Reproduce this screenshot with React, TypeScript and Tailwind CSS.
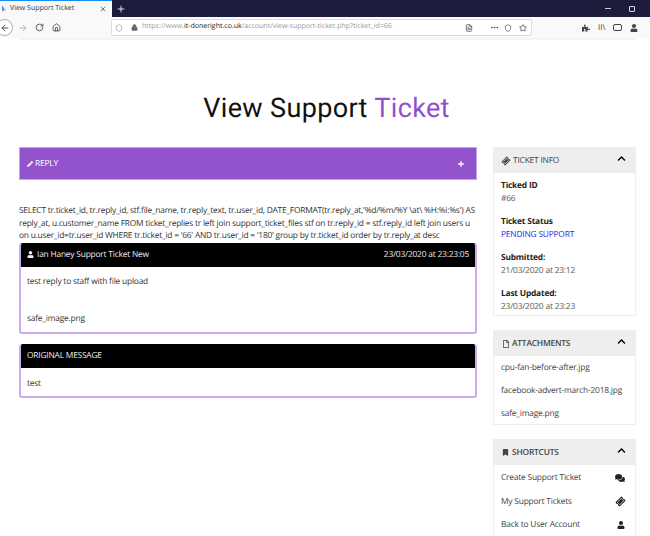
import { ArrowLeft, ArrowRight, FileText, Home, Lock, MoreHorizontal, Plus, RotateCw, Shield, Star, X } from "lucide-react";
import { FaBookmark, FaChevronUp, FaComments, FaPencilAlt, FaPuzzlePiece, FaRegFile, FaTicketAlt, FaUser } from "react-icons/fa";

function Chrome() {
  return (
    <div className="shrink-0 tracking-normal">
      {/* Tab strip */}
      <div className="flex h-[17px] items-stretch bg-[#1c1c3c]">
        <div className="flex w-[112px] items-center border-t border-t-[#1c8cf0] bg-[#f9f9fb] pl-[1px] pr-[5px] text-[7px] text-[#333]">
          <svg width="6" height="8" viewBox="0 0 6 8" className="mr-[3px]"><path d="M1 0v7l2-2 2 1z" fill="#6d8fe0" /></svg>
          <span className="flex-1">View Support Ticket</span>
          <X size={8} strokeWidth={2} />
        </div>
        <div className="flex w-[18px] items-center justify-center text-white"><Plus size={10} strokeWidth={2} /></div>
        <div className="flex flex-1 items-center justify-end gap-[18px] pr-[15px] text-white">
          <div className="h-[1px] w-[6px] bg-[#ccc]" />
          <div className="size-[6px] rounded-[1px] border border-[#ddd]" />
        </div>
      </div>
      {/* Toolbar */}
      <div className="flex h-[21px] items-center bg-[#f9f9fb] text-[#333]">
        <div className="-ml-[4px] flex size-[17px] items-center justify-center rounded-full border border-[#aaa] bg-white">
          <ArrowLeft size={10} />
        </div>
        <ArrowRight size={10} className="ml-[5px] text-[#aaa]" />
        <RotateCw size={9} className="ml-[7px]" />
        <Home size={9} className="ml-[8px]" />
        <div className="ml-[50px] flex h-[17px] w-[421px] items-center rounded-[2px] border border-[#ddd] bg-white pl-[3px] text-[7px] text-[#999]">
          <Shield size={8} />
          <Lock size={7} className="ml-[8px] text-[#666]" fill="#666" />
          <span className="ml-[4px] flex-1">https://www.<span className="text-[#222]">it-doneright.co.uk</span>/account/view-support-ticket.php?ticket_id=66</span>
          <FileText size={8} className="mr-[3px] text-[#444]" />
          <MoreHorizontal size={9} className="ml-[14px] text-[#333]" />
          <Shield size={8} className="ml-[5px] text-[#444]" />
          <Star size={8} className="ml-[7px] mr-[4px] text-[#333]" />
        </div>
        <div className="ml-[50px] flex items-center gap-[8px] text-[#444]">
          <FaPuzzlePiece size={8} />
          <span className="text-[8px] leading-none">II\</span>
          <div className="h-[7px] w-[9px] rounded-[2px] border border-[#444]" />
          <FaUser size={8} />
        </div>
      </div>
      <div className="ml-[19px] h-[2px] w-[617px] bg-[#f4f4f4]" />
    </div>
  );
}

function Message({ title, right, children }: { title: React.ReactNode; right?: string; children: React.ReactNode }) {
  return (
    <div className="overflow-hidden rounded-[3px] border-x-2 border-b-2 border-x-[#c9adee] border-b-[#c9adee] bg-white">
      <div className="-mx-[2px] flex h-[24px] items-center justify-between bg-black px-[8px] pt-[1px] text-[#eee]">
        <span className="flex items-center gap-[3px]">{title}</span>
        {right && <span>{right}</span>}
      </div>
      {children}
    </div>
  );
}

function Panel({ icon, title, strong, children }: { icon: React.ReactNode; title: string; strong?: boolean; children: React.ReactNode }) {
  return (
    <div className="border border-[#eeeeee] bg-white">
      <div className="flex h-[25px] items-center justify-between bg-[#eeeeee] pl-[8px] pr-[9px] pt-[1px] text-[#444]">
        <span className={strong ? "flex items-center gap-[2px] font-semibold" : "flex items-center gap-[2px]"}>{icon}{title}</span>
        <FaChevronUp size={9} className="-mt-[5px] text-black" />
      </div>
      {children}
    </div>
  );
}

function Info({ label, value, blue }: { label: string; value: string; blue?: boolean }) {
  return (
    <div className="leading-[12.5px]">
      <div className="font-bold text-[#222]">{label}</div>
      <div className={blue ? "text-[#2a2ae8]" : "text-[#555]"}>{value}</div>
    </div>
  );
}

export default function App() {
  return (
    <div className="flex h-[536px] w-[650px] flex-col overflow-hidden bg-white font-['Open_Sans',sans-serif] text-[8.4px] tracking-[-0.2px] text-[#333] [text-rendering:geometricPrecision]">
      <Chrome />
      <div className="flex h-[82px] shrink-0 items-end justify-center pl-[3px]">
        <h1 className="font-['Roboto',sans-serif] text-[27px] leading-[28px] tracking-[0.35px] text-[#111]">
          View Support <span className="text-[#8f4fd0]">Ticket</span>
        </h1>
      </div>
      <div className="mt-[25px] flex gap-[16px] pl-[19px]">
        {/* Main column */}
        <div className="w-[458px] shrink-0">
          <div className="flex h-[33px] items-center justify-between border border-[#c4a3ea] bg-[#9253cd] pl-[7px] pr-[11px] text-white">
            <span className="flex items-center gap-[2px] pt-[2px]"><FaPencilAlt size={6} />REPLY</span>
            <Plus size={8} strokeWidth={4} />
          </div>
          <p className="mt-[25px] leading-[12.5px] tracking-[-0.23px] text-[#333]">
            SELECT tr.ticket_id, tr.reply_id, stf.file_name, tr.reply_text, tr.user_id, DATE_FORMAT(tr.reply_at,'%d/%m/%Y \at\ %H:%i:%s') AS reply_at, u.customer_name FROM ticket_replies tr left join support_ticket_files stf on tr.reply_id = stf.reply_id left join users u on u.user_id=tr.user_id WHERE tr.ticket_id = '66' AND tr.user_id = '180' group by tr.ticket_id order by tr.reply_at desc
          </p>
          <Message title={<><FaUser size={7} />Ian Haney Support Ticket New</>} right="23/03/2020 at 23:23:05">
            <div className="flex h-[65px] flex-col justify-between px-[6px] pt-[9px] pb-[7px] leading-[12px]">
              <div>test reply to staff with file upload</div>
              <div>safe_image.png</div>
            </div>
          </Message>
          <div className="mt-[10px]">
            <Message title="ORIGINAL MESSAGE">
              <div className="h-[28px] px-[6px] pt-[10px] leading-[12px]">test</div>
            </Message>
          </div>
        </div>
        {/* Sidebar */}
        <div className="flex w-[143px] shrink-0 flex-col gap-[14px]">
          <Panel icon={<FaTicketAlt size={8} className="mr-[1px] -rotate-45" />} title="TICKET INFO">
            <div className="flex h-[142px] flex-col gap-[11px] px-[7px] pt-[7px]">
              <Info label="Ticked ID" value="#66" />
              <Info label="Ticket Status" value="PENDING SUPPORT" blue />
              <Info label="Submitted:" value="21/03/2020 at 23:12" />
              <Info label="Last Updated:" value="23/03/2020 at 23:23" />
            </div>
          </Panel>
          <Panel icon={<FaRegFile size={8} />} title="ATTACHMENTS" strong>
            <div className="flex h-[68px] flex-col gap-[11px] px-[7px] pt-[6px] leading-[12px] text-[#444]">
              <div>cpu-fan-before-after.jpg</div>
              <div className="whitespace-nowrap">facebook-advert-march-2018.jpg</div>
              <div>safe_image.png</div>
            </div>
          </Panel>
          <Panel icon={<FaBookmark size={7} className="mr-[1px]" />} title="SHORTCUTS" strong>
            <div className="flex h-[80px] flex-col gap-[11.5px] px-[7px] pt-[7px] leading-[12px] text-[#444]">
              <div className="flex items-center justify-between pr-[3px]">Create Support Ticket<FaComments size={10} className="text-[#222]" /></div>
              <div className="flex items-center justify-between pr-[3px]">My Support Tickets<FaTicketAlt size={9} className="-rotate-45 text-[#222]" /></div>
              <div className="flex items-center justify-between pr-[3px]">Back to User Account<FaUser size={8} className="text-[#222]" /></div>
            </div>
          </Panel>
        </div>
      </div>
    </div>
  );
}
